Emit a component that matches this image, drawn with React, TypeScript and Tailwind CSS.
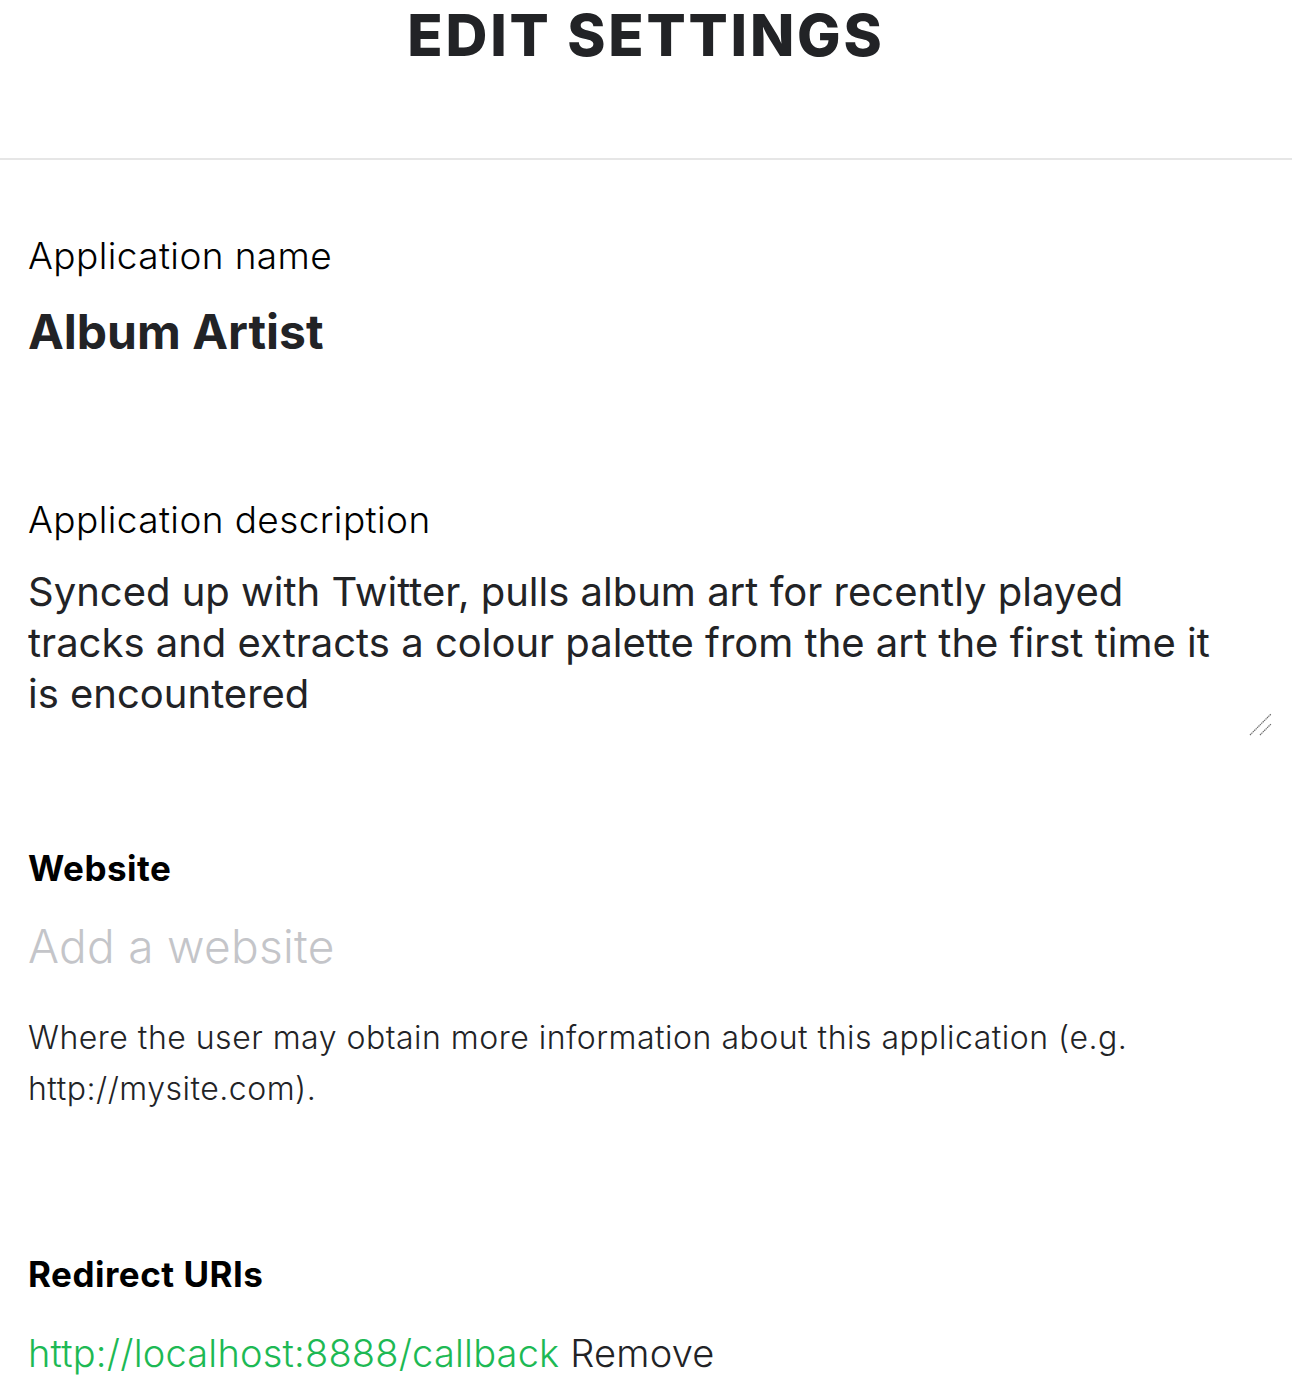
export default function App() {
  return (
    <div className="min-h-[1396px] w-full bg-white text-[#181818] font-['Inter','Liberation_Sans',sans-serif]">
      {/* header */}
      <div className="h-[160px] border-b-2 border-[#e6e6e6] text-center">
        <h1 className="text-[58px] leading-[70px] font-extrabold tracking-[2.8px] text-[#222326]">
          EDIT SETTINGS
        </h1>
      </div>

      <div className="pl-[28px] pr-[20px]">
        {/* name */}
        <div className="pt-[72px]">
          <label className="block text-[37px] leading-[48px] font-light tracking-[0.4px] text-black">
            Application name
          </label>
          <div className="mt-[24px] text-[48px] leading-[56px] font-bold text-[#222326]">
            Album Artist
          </div>
        </div>

        {/* description */}
        <div className="pt-[136px]">
          <label className="block text-[37px] leading-[48px] font-light tracking-[0.4px] text-black">
            Application description
          </label>
          <div className="relative mt-[22px]">
            <textarea
              className="block h-[172px] w-full resize-none pr-[30px] text-[40px] leading-[51px] font-normal text-[#222326] outline-none"
              defaultValue="Synced up with Twitter, pulls album art for recently played tracks and extracts a colour palette from the art the first time it is encountered"
            />
            {/* resize grip */}
            <svg
              className="absolute bottom-[2px] right-0"
              width="24"
              height="24"
              viewBox="0 0 24 24"
            >
              <path d="M2 23 L23 2 M12 23 L23 12" stroke="#6b6b6b" strokeWidth="1.2" strokeDasharray="1.4 0.6" />
            </svg>
          </div>
        </div>

        {/* website */}
        <div className="pt-[108px]">
          <h3 className="text-[35px] leading-[44px] font-bold tracking-[0.5px] text-black">Website</h3>
          <input
            className="mt-[28px] block w-full text-[46px] leading-[56px] font-light tracking-[0.3px] text-[#222326] outline-none placeholder:text-[#c4c5c9]"
            placeholder="Add a website"
          />
          <p className="mt-[38px] text-[32px] leading-[51px] font-light tracking-[0.5px] text-[#222326]">
            Where the user may obtain more information about this application (e.g. http://mysite.com).
          </p>
        </div>

        {/* redirect */}
        <div className="pt-[138px]">
          <h3 className="text-[35px] leading-[44px] font-bold tracking-[0.5px] text-black">Redirect URIs</h3>
          <div className="mt-[32px] text-[38px] leading-[50px] font-light tracking-[0.2px]">
            <span className="text-[#1db954]">http://localhost:8888/callback</span>{' '}
            <button className="text-[#222326] font-light">Remove</button>
          </div>
        </div>
      </div>
    </div>
  )
}
